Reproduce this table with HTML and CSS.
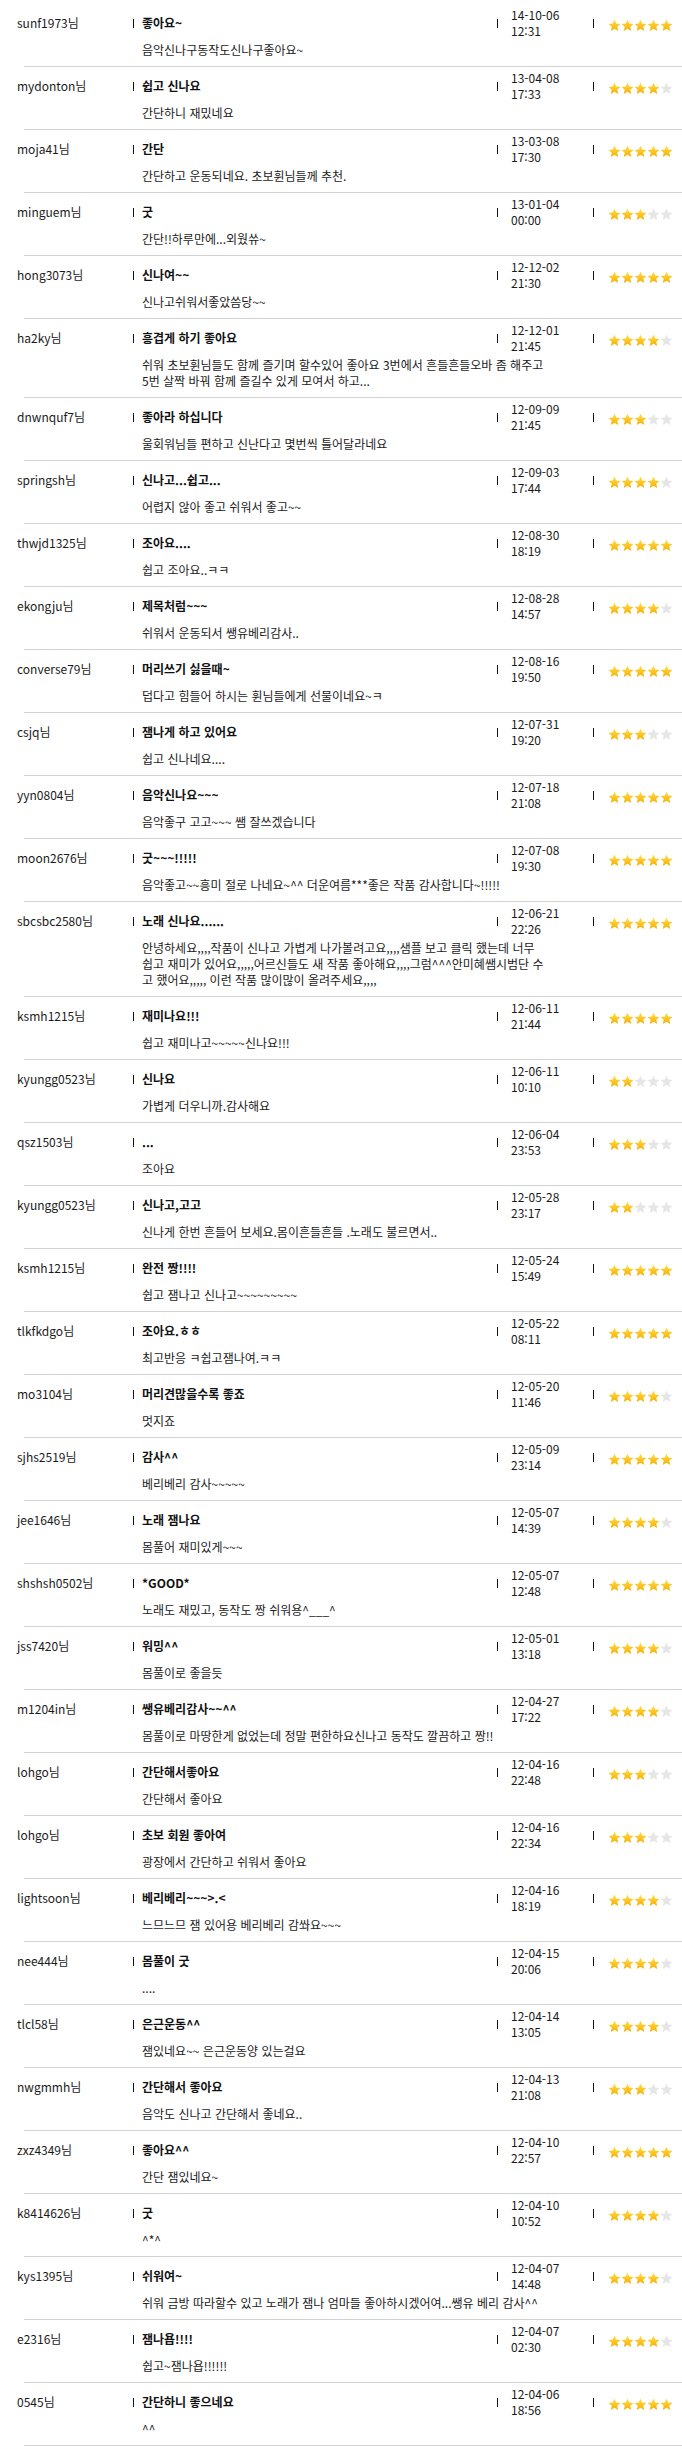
FILE: index.html
```html
<!DOCTYPE html>
<html lang="ko">
<head>
<meta charset="utf-8">
<title>작품 후기</title>
<link rel="stylesheet" href="styles.css">
</head>
<body>
<svg class="defs" width="0" height="0" aria-hidden="true">
  <defs>
    <linearGradient id="gold" x1="0" y1="0" x2="0" y2="1">
      <stop offset="0" stop-color="#ffdf4d"/>
      <stop offset="1" stop-color="#f7ae00"/>
    </linearGradient>
    <symbol id="s" viewBox="0 0 24 24">
      <polygon points="12,1 15.2,8.4 23,9.1 17.1,14.3 18.9,22.2 12,18 5.1,22.2 6.9,14.3 1,9.1 8.8,8.4"/>
    </symbol>
  </defs>
</svg>
<ul class="reviews">
<li class="review"><div class="head"><span class="user">sunf1973님</span><span class="sep"></span><strong class="title">좋아요~</strong><span class="sep"></span><span class="date">14-10-06<br>12:31</span><span class="sep"></span><span class="stars"><svg class="star on"><use href="#s"/></svg><svg class="star on"><use href="#s"/></svg><svg class="star on"><use href="#s"/></svg><svg class="star on"><use href="#s"/></svg><svg class="star on"><use href="#s"/></svg></span></div><p class="comment">음악신나구동작도신나구좋아요~</p></li>
<li class="review"><div class="head"><span class="user">mydonton님</span><span class="sep"></span><strong class="title">쉽고 신나요</strong><span class="sep"></span><span class="date">13-04-08<br>17:33</span><span class="sep"></span><span class="stars"><svg class="star on"><use href="#s"/></svg><svg class="star on"><use href="#s"/></svg><svg class="star on"><use href="#s"/></svg><svg class="star on"><use href="#s"/></svg><svg class="star"><use href="#s"/></svg></span></div><p class="comment">간단하니 재밌네요</p></li>
<li class="review"><div class="head"><span class="user">moja41님</span><span class="sep"></span><strong class="title">간단</strong><span class="sep"></span><span class="date">13-03-08<br>17:30</span><span class="sep"></span><span class="stars"><svg class="star on"><use href="#s"/></svg><svg class="star on"><use href="#s"/></svg><svg class="star on"><use href="#s"/></svg><svg class="star on"><use href="#s"/></svg><svg class="star on"><use href="#s"/></svg></span></div><p class="comment">간단하고 운동되네요. 초보휜님들께 추천.</p></li>
<li class="review"><div class="head"><span class="user">minguem님</span><span class="sep"></span><strong class="title">굿</strong><span class="sep"></span><span class="date">13-01-04<br>00:00</span><span class="sep"></span><span class="stars"><svg class="star on"><use href="#s"/></svg><svg class="star on"><use href="#s"/></svg><svg class="star on"><use href="#s"/></svg><svg class="star"><use href="#s"/></svg><svg class="star"><use href="#s"/></svg></span></div><p class="comment">간단!!하루만에...외웠쓔~</p></li>
<li class="review"><div class="head"><span class="user">hong3073님</span><span class="sep"></span><strong class="title">신나여~~</strong><span class="sep"></span><span class="date">12-12-02<br>21:30</span><span class="sep"></span><span class="stars"><svg class="star on"><use href="#s"/></svg><svg class="star on"><use href="#s"/></svg><svg class="star on"><use href="#s"/></svg><svg class="star on"><use href="#s"/></svg><svg class="star on"><use href="#s"/></svg></span></div><p class="comment">신나고쉬워서좋았씀당~~</p></li>
<li class="review"><div class="head"><span class="user">ha2ky님</span><span class="sep"></span><strong class="title">흥겹게 하기 좋아요</strong><span class="sep"></span><span class="date">12-12-01<br>21:45</span><span class="sep"></span><span class="stars"><svg class="star on"><use href="#s"/></svg><svg class="star on"><use href="#s"/></svg><svg class="star on"><use href="#s"/></svg><svg class="star on"><use href="#s"/></svg><svg class="star"><use href="#s"/></svg></span></div><p class="comment">쉬워 초보휜님들도 함께 즐기며 할수있어 좋아요 3번에서 흔들흔들오바 좀 해주고<br>5번 살짝 바꿔 함께 즐길수 있게 모여서 하고...</p></li>
<li class="review"><div class="head"><span class="user">dnwnquf7님</span><span class="sep"></span><strong class="title">좋아라 하십니다</strong><span class="sep"></span><span class="date">12-09-09<br>21:45</span><span class="sep"></span><span class="stars"><svg class="star on"><use href="#s"/></svg><svg class="star on"><use href="#s"/></svg><svg class="star on"><use href="#s"/></svg><svg class="star"><use href="#s"/></svg><svg class="star"><use href="#s"/></svg></span></div><p class="comment">울회워님들 편하고 신난다고 몇번씩 틀어달라네요</p></li>
<li class="review"><div class="head"><span class="user">springsh님</span><span class="sep"></span><strong class="title">신나고...쉽고...</strong><span class="sep"></span><span class="date">12-09-03<br>17:44</span><span class="sep"></span><span class="stars"><svg class="star on"><use href="#s"/></svg><svg class="star on"><use href="#s"/></svg><svg class="star on"><use href="#s"/></svg><svg class="star on"><use href="#s"/></svg><svg class="star"><use href="#s"/></svg></span></div><p class="comment">어렵지 않아 좋고 쉬워서 좋고~~</p></li>
<li class="review"><div class="head"><span class="user">thwjd1325님</span><span class="sep"></span><strong class="title">조아요....</strong><span class="sep"></span><span class="date">12-08-30<br>18:19</span><span class="sep"></span><span class="stars"><svg class="star on"><use href="#s"/></svg><svg class="star on"><use href="#s"/></svg><svg class="star on"><use href="#s"/></svg><svg class="star on"><use href="#s"/></svg><svg class="star on"><use href="#s"/></svg></span></div><p class="comment">쉽고 조아요..ㅋㅋ</p></li>
<li class="review"><div class="head"><span class="user">ekongju님</span><span class="sep"></span><strong class="title">제목처럼~~~</strong><span class="sep"></span><span class="date">12-08-28<br>14:57</span><span class="sep"></span><span class="stars"><svg class="star on"><use href="#s"/></svg><svg class="star on"><use href="#s"/></svg><svg class="star on"><use href="#s"/></svg><svg class="star on"><use href="#s"/></svg><svg class="star"><use href="#s"/></svg></span></div><p class="comment">쉬워서 운동되서 쌩유베리감사..</p></li>
<li class="review"><div class="head"><span class="user">converse79님</span><span class="sep"></span><strong class="title">머리쓰기 싫을때~</strong><span class="sep"></span><span class="date">12-08-16<br>19:50</span><span class="sep"></span><span class="stars"><svg class="star on"><use href="#s"/></svg><svg class="star on"><use href="#s"/></svg><svg class="star on"><use href="#s"/></svg><svg class="star on"><use href="#s"/></svg><svg class="star on"><use href="#s"/></svg></span></div><p class="comment">덥다고 힘들어 하시는 휜님들에게 선물이네요~ㅋ</p></li>
<li class="review"><div class="head"><span class="user">csjq님</span><span class="sep"></span><strong class="title">잼나게 하고 있어요</strong><span class="sep"></span><span class="date">12-07-31<br>19:20</span><span class="sep"></span><span class="stars"><svg class="star on"><use href="#s"/></svg><svg class="star on"><use href="#s"/></svg><svg class="star on"><use href="#s"/></svg><svg class="star"><use href="#s"/></svg><svg class="star"><use href="#s"/></svg></span></div><p class="comment">쉽고 신나네요....</p></li>
<li class="review"><div class="head"><span class="user">yyn0804님</span><span class="sep"></span><strong class="title">음악신나요~~~</strong><span class="sep"></span><span class="date">12-07-18<br>21:08</span><span class="sep"></span><span class="stars"><svg class="star on"><use href="#s"/></svg><svg class="star on"><use href="#s"/></svg><svg class="star on"><use href="#s"/></svg><svg class="star on"><use href="#s"/></svg><svg class="star on"><use href="#s"/></svg></span></div><p class="comment">음악좋구 고고~~~ 쌤 잘쓰겠습니다</p></li>
<li class="review"><div class="head"><span class="user">moon2676님</span><span class="sep"></span><strong class="title">굿~~~!!!!!</strong><span class="sep"></span><span class="date">12-07-08<br>19:30</span><span class="sep"></span><span class="stars"><svg class="star on"><use href="#s"/></svg><svg class="star on"><use href="#s"/></svg><svg class="star on"><use href="#s"/></svg><svg class="star on"><use href="#s"/></svg><svg class="star on"><use href="#s"/></svg></span></div><p class="comment">음악좋고~~흥미 절로 나네요~^^ 더운여름***좋은 작품 감사합니다~!!!!!</p></li>
<li class="review"><div class="head"><span class="user">sbcsbc2580님</span><span class="sep"></span><strong class="title">노래 신나요......</strong><span class="sep"></span><span class="date">12-06-21<br>22:26</span><span class="sep"></span><span class="stars"><svg class="star on"><use href="#s"/></svg><svg class="star on"><use href="#s"/></svg><svg class="star on"><use href="#s"/></svg><svg class="star on"><use href="#s"/></svg><svg class="star on"><use href="#s"/></svg></span></div><p class="comment">안녕하세요,,,,작품이 신나고 가볍게 나가볼려고요,,,,샘플 보고 클릭 했는데 너무<br>쉽고 재미가 있어요,,,,,어르신들도 새 작품 좋아해요,,,,그럼^^^안미혜쌤시범단 수<br>고 했어요,,,,, 이런 작품 많이많이 올려주세요,,,,</p></li>
<li class="review"><div class="head"><span class="user">ksmh1215님</span><span class="sep"></span><strong class="title">재미나요!!!</strong><span class="sep"></span><span class="date">12-06-11<br>21:44</span><span class="sep"></span><span class="stars"><svg class="star on"><use href="#s"/></svg><svg class="star on"><use href="#s"/></svg><svg class="star on"><use href="#s"/></svg><svg class="star on"><use href="#s"/></svg><svg class="star on"><use href="#s"/></svg></span></div><p class="comment">쉽고 재미나고~~~~~신나요!!!</p></li>
<li class="review"><div class="head"><span class="user">kyungg0523님</span><span class="sep"></span><strong class="title">신나요</strong><span class="sep"></span><span class="date">12-06-11<br>10:10</span><span class="sep"></span><span class="stars"><svg class="star on"><use href="#s"/></svg><svg class="star on"><use href="#s"/></svg><svg class="star"><use href="#s"/></svg><svg class="star"><use href="#s"/></svg><svg class="star"><use href="#s"/></svg></span></div><p class="comment">가볍게 더우니까.감사해요</p></li>
<li class="review"><div class="head"><span class="user">qsz1503님</span><span class="sep"></span><strong class="title">...</strong><span class="sep"></span><span class="date">12-06-04<br>23:53</span><span class="sep"></span><span class="stars"><svg class="star on"><use href="#s"/></svg><svg class="star on"><use href="#s"/></svg><svg class="star on"><use href="#s"/></svg><svg class="star"><use href="#s"/></svg><svg class="star"><use href="#s"/></svg></span></div><p class="comment">조아요</p></li>
<li class="review"><div class="head"><span class="user">kyungg0523님</span><span class="sep"></span><strong class="title">신나고,고고</strong><span class="sep"></span><span class="date">12-05-28<br>23:17</span><span class="sep"></span><span class="stars"><svg class="star on"><use href="#s"/></svg><svg class="star on"><use href="#s"/></svg><svg class="star"><use href="#s"/></svg><svg class="star"><use href="#s"/></svg><svg class="star"><use href="#s"/></svg></span></div><p class="comment">신나게 한번 흔들어 보세요.몸이흔들흔들 .노래도 불르면서..</p></li>
<li class="review"><div class="head"><span class="user">ksmh1215님</span><span class="sep"></span><strong class="title">완전 짱!!!!</strong><span class="sep"></span><span class="date">12-05-24<br>15:49</span><span class="sep"></span><span class="stars"><svg class="star on"><use href="#s"/></svg><svg class="star on"><use href="#s"/></svg><svg class="star on"><use href="#s"/></svg><svg class="star on"><use href="#s"/></svg><svg class="star on"><use href="#s"/></svg></span></div><p class="comment">쉽고 잼나고 신나고~~~~~~~~~</p></li>
<li class="review"><div class="head"><span class="user">tlkfkdgo님</span><span class="sep"></span><strong class="title">조아요.ㅎㅎ</strong><span class="sep"></span><span class="date">12-05-22<br>08:11</span><span class="sep"></span><span class="stars"><svg class="star on"><use href="#s"/></svg><svg class="star on"><use href="#s"/></svg><svg class="star on"><use href="#s"/></svg><svg class="star on"><use href="#s"/></svg><svg class="star on"><use href="#s"/></svg></span></div><p class="comment">최고반응 ㅋ쉽고잼나여.ㅋㅋ</p></li>
<li class="review"><div class="head"><span class="user">mo3104님</span><span class="sep"></span><strong class="title">머리견많을수록 좋죠</strong><span class="sep"></span><span class="date">12-05-20<br>11:46</span><span class="sep"></span><span class="stars"><svg class="star on"><use href="#s"/></svg><svg class="star on"><use href="#s"/></svg><svg class="star on"><use href="#s"/></svg><svg class="star on"><use href="#s"/></svg><svg class="star"><use href="#s"/></svg></span></div><p class="comment">멋지죠</p></li>
<li class="review"><div class="head"><span class="user">sjhs2519님</span><span class="sep"></span><strong class="title">감사^^</strong><span class="sep"></span><span class="date">12-05-09<br>23:14</span><span class="sep"></span><span class="stars"><svg class="star on"><use href="#s"/></svg><svg class="star on"><use href="#s"/></svg><svg class="star on"><use href="#s"/></svg><svg class="star on"><use href="#s"/></svg><svg class="star on"><use href="#s"/></svg></span></div><p class="comment">베리베리 감사~~~~~</p></li>
<li class="review"><div class="head"><span class="user">jee1646님</span><span class="sep"></span><strong class="title">노래 잼나요</strong><span class="sep"></span><span class="date">12-05-07<br>14:39</span><span class="sep"></span><span class="stars"><svg class="star on"><use href="#s"/></svg><svg class="star on"><use href="#s"/></svg><svg class="star on"><use href="#s"/></svg><svg class="star on"><use href="#s"/></svg><svg class="star"><use href="#s"/></svg></span></div><p class="comment">몸풀어 재미있게~~~</p></li>
<li class="review"><div class="head"><span class="user">shshsh0502님</span><span class="sep"></span><strong class="title">*GOOD*</strong><span class="sep"></span><span class="date">12-05-07<br>12:48</span><span class="sep"></span><span class="stars"><svg class="star on"><use href="#s"/></svg><svg class="star on"><use href="#s"/></svg><svg class="star on"><use href="#s"/></svg><svg class="star on"><use href="#s"/></svg><svg class="star on"><use href="#s"/></svg></span></div><p class="comment">노래도 재밌고, 동작도 짱 쉬워용^___^</p></li>
<li class="review"><div class="head"><span class="user">jss7420님</span><span class="sep"></span><strong class="title">워밍^^</strong><span class="sep"></span><span class="date">12-05-01<br>13:18</span><span class="sep"></span><span class="stars"><svg class="star on"><use href="#s"/></svg><svg class="star on"><use href="#s"/></svg><svg class="star on"><use href="#s"/></svg><svg class="star on"><use href="#s"/></svg><svg class="star"><use href="#s"/></svg></span></div><p class="comment">몸풀이로 좋을듯</p></li>
<li class="review"><div class="head"><span class="user">m1204in님</span><span class="sep"></span><strong class="title">쌩유베리감사~~^^</strong><span class="sep"></span><span class="date">12-04-27<br>17:22</span><span class="sep"></span><span class="stars"><svg class="star on"><use href="#s"/></svg><svg class="star on"><use href="#s"/></svg><svg class="star on"><use href="#s"/></svg><svg class="star on"><use href="#s"/></svg><svg class="star"><use href="#s"/></svg></span></div><p class="comment">몸풀이로 마땅한게 없었는데 정말 편한하요신나고 동작도 깔끔하고 짱!!</p></li>
<li class="review"><div class="head"><span class="user">lohgo님</span><span class="sep"></span><strong class="title">간단해서좋아요</strong><span class="sep"></span><span class="date">12-04-16<br>22:48</span><span class="sep"></span><span class="stars"><svg class="star on"><use href="#s"/></svg><svg class="star on"><use href="#s"/></svg><svg class="star on"><use href="#s"/></svg><svg class="star"><use href="#s"/></svg><svg class="star"><use href="#s"/></svg></span></div><p class="comment">간단해서 좋아요</p></li>
<li class="review"><div class="head"><span class="user">lohgo님</span><span class="sep"></span><strong class="title">초보 회원 좋아여</strong><span class="sep"></span><span class="date">12-04-16<br>22:34</span><span class="sep"></span><span class="stars"><svg class="star on"><use href="#s"/></svg><svg class="star on"><use href="#s"/></svg><svg class="star on"><use href="#s"/></svg><svg class="star"><use href="#s"/></svg><svg class="star"><use href="#s"/></svg></span></div><p class="comment">광장에서 간단하고 쉬워서 좋아요</p></li>
<li class="review"><div class="head"><span class="user">lightsoon님</span><span class="sep"></span><strong class="title">베리베리~~~&gt;.&lt;</strong><span class="sep"></span><span class="date">12-04-16<br>18:19</span><span class="sep"></span><span class="stars"><svg class="star on"><use href="#s"/></svg><svg class="star on"><use href="#s"/></svg><svg class="star on"><use href="#s"/></svg><svg class="star on"><use href="#s"/></svg><svg class="star"><use href="#s"/></svg></span></div><p class="comment">느므느므 잼 있어용 베리베리 감쏴요~~~</p></li>
<li class="review"><div class="head"><span class="user">nee444님</span><span class="sep"></span><strong class="title">몸풀이 굿</strong><span class="sep"></span><span class="date">12-04-15<br>20:06</span><span class="sep"></span><span class="stars"><svg class="star on"><use href="#s"/></svg><svg class="star on"><use href="#s"/></svg><svg class="star on"><use href="#s"/></svg><svg class="star on"><use href="#s"/></svg><svg class="star"><use href="#s"/></svg></span></div><p class="comment">....</p></li>
<li class="review"><div class="head"><span class="user">tlcl58님</span><span class="sep"></span><strong class="title">은근운동^^</strong><span class="sep"></span><span class="date">12-04-14<br>13:05</span><span class="sep"></span><span class="stars"><svg class="star on"><use href="#s"/></svg><svg class="star on"><use href="#s"/></svg><svg class="star on"><use href="#s"/></svg><svg class="star on"><use href="#s"/></svg><svg class="star"><use href="#s"/></svg></span></div><p class="comment">잼있네요~~ 은근운동양 있는걸요</p></li>
<li class="review"><div class="head"><span class="user">nwgmmh님</span><span class="sep"></span><strong class="title">간단해서 좋아요</strong><span class="sep"></span><span class="date">12-04-13<br>21:08</span><span class="sep"></span><span class="stars"><svg class="star on"><use href="#s"/></svg><svg class="star on"><use href="#s"/></svg><svg class="star on"><use href="#s"/></svg><svg class="star"><use href="#s"/></svg><svg class="star"><use href="#s"/></svg></span></div><p class="comment">음악도 신나고 간단해서 좋네요..</p></li>
<li class="review"><div class="head"><span class="user">zxz4349님</span><span class="sep"></span><strong class="title">좋아요^^</strong><span class="sep"></span><span class="date">12-04-10<br>22:57</span><span class="sep"></span><span class="stars"><svg class="star on"><use href="#s"/></svg><svg class="star on"><use href="#s"/></svg><svg class="star on"><use href="#s"/></svg><svg class="star on"><use href="#s"/></svg><svg class="star on"><use href="#s"/></svg></span></div><p class="comment">간단 잼있네요~</p></li>
<li class="review"><div class="head"><span class="user">k8414626님</span><span class="sep"></span><strong class="title">굿</strong><span class="sep"></span><span class="date">12-04-10<br>10:52</span><span class="sep"></span><span class="stars"><svg class="star on"><use href="#s"/></svg><svg class="star on"><use href="#s"/></svg><svg class="star on"><use href="#s"/></svg><svg class="star on"><use href="#s"/></svg><svg class="star"><use href="#s"/></svg></span></div><p class="comment">^*^</p></li>
<li class="review"><div class="head"><span class="user">kys1395님</span><span class="sep"></span><strong class="title">쉬워여~</strong><span class="sep"></span><span class="date">12-04-07<br>14:48</span><span class="sep"></span><span class="stars"><svg class="star on"><use href="#s"/></svg><svg class="star on"><use href="#s"/></svg><svg class="star on"><use href="#s"/></svg><svg class="star on"><use href="#s"/></svg><svg class="star"><use href="#s"/></svg></span></div><p class="comment">쉬워 금방 따라할수 있고 노래가 잼나 엄마들 좋아하시겠어여...쌩유 베리 감사^^</p></li>
<li class="review"><div class="head"><span class="user">e2316님</span><span class="sep"></span><strong class="title">잼나욥!!!!</strong><span class="sep"></span><span class="date">12-04-07<br>02:30</span><span class="sep"></span><span class="stars"><svg class="star on"><use href="#s"/></svg><svg class="star on"><use href="#s"/></svg><svg class="star on"><use href="#s"/></svg><svg class="star on"><use href="#s"/></svg><svg class="star"><use href="#s"/></svg></span></div><p class="comment">쉽고~잼나욥!!!!!!</p></li>
<li class="review"><div class="head"><span class="user">0545님</span><span class="sep"></span><strong class="title">간단하니 좋으네요</strong><span class="sep"></span><span class="date">12-04-06<br>18:56</span><span class="sep"></span><span class="stars"><svg class="star on"><use href="#s"/></svg><svg class="star on"><use href="#s"/></svg><svg class="star on"><use href="#s"/></svg><svg class="star on"><use href="#s"/></svg><svg class="star on"><use href="#s"/></svg></span></div><p class="comment">^^</p></li>
</ul>
</body>
</html>
```
FILE: styles.css
```css
html, body {
  margin: 0;
  padding: 0;
  background: #fff;
}
body {
  font-family: "Noto Sans CJK KR", "Noto Sans", sans-serif;
  font-size: 12px;
  color: #1a1a1a;
}
.defs {
  position: absolute;
  width: 0;
  height: 0;
  overflow: hidden;
}
.reviews {
  list-style: none;
  margin: 0;
  padding: 4px 0 0;
}
.review {
  padding: 3px 0 9px;
  background: linear-gradient(#d3d3d3, #d3d3d3) no-repeat 24px 100% / calc(100% - 24px) 1px;
}
.head {
  display: grid;
  grid-template-columns: 116px 1px 363px 1px 95px 1px auto;
  align-items: center;
  height: 32px;
  padding-left: 17px;
}
.user {
  line-height: 16px;
  white-space: nowrap;
}
.sep {
  width: 1px;
  height: 9px;
  background: #111;
}
.title {
  padding-left: 8px;
  font-weight: bold;
  color: #111;
  line-height: 16px;
  white-space: nowrap;
}
.date {
  padding-left: 13px;
  line-height: 16px;
}
.stars {
  display: flex;
  padding-left: 14px;
  margin-top: 4px;
}
.star {
  width: 13px;
  height: 13px;
  fill: #e6e6e6;
}
.star.on {
  fill: url(#gold);
}
.comment {
  margin: 3px 0 0 142px;
  width: 460px;
  line-height: 16px;
}
```
